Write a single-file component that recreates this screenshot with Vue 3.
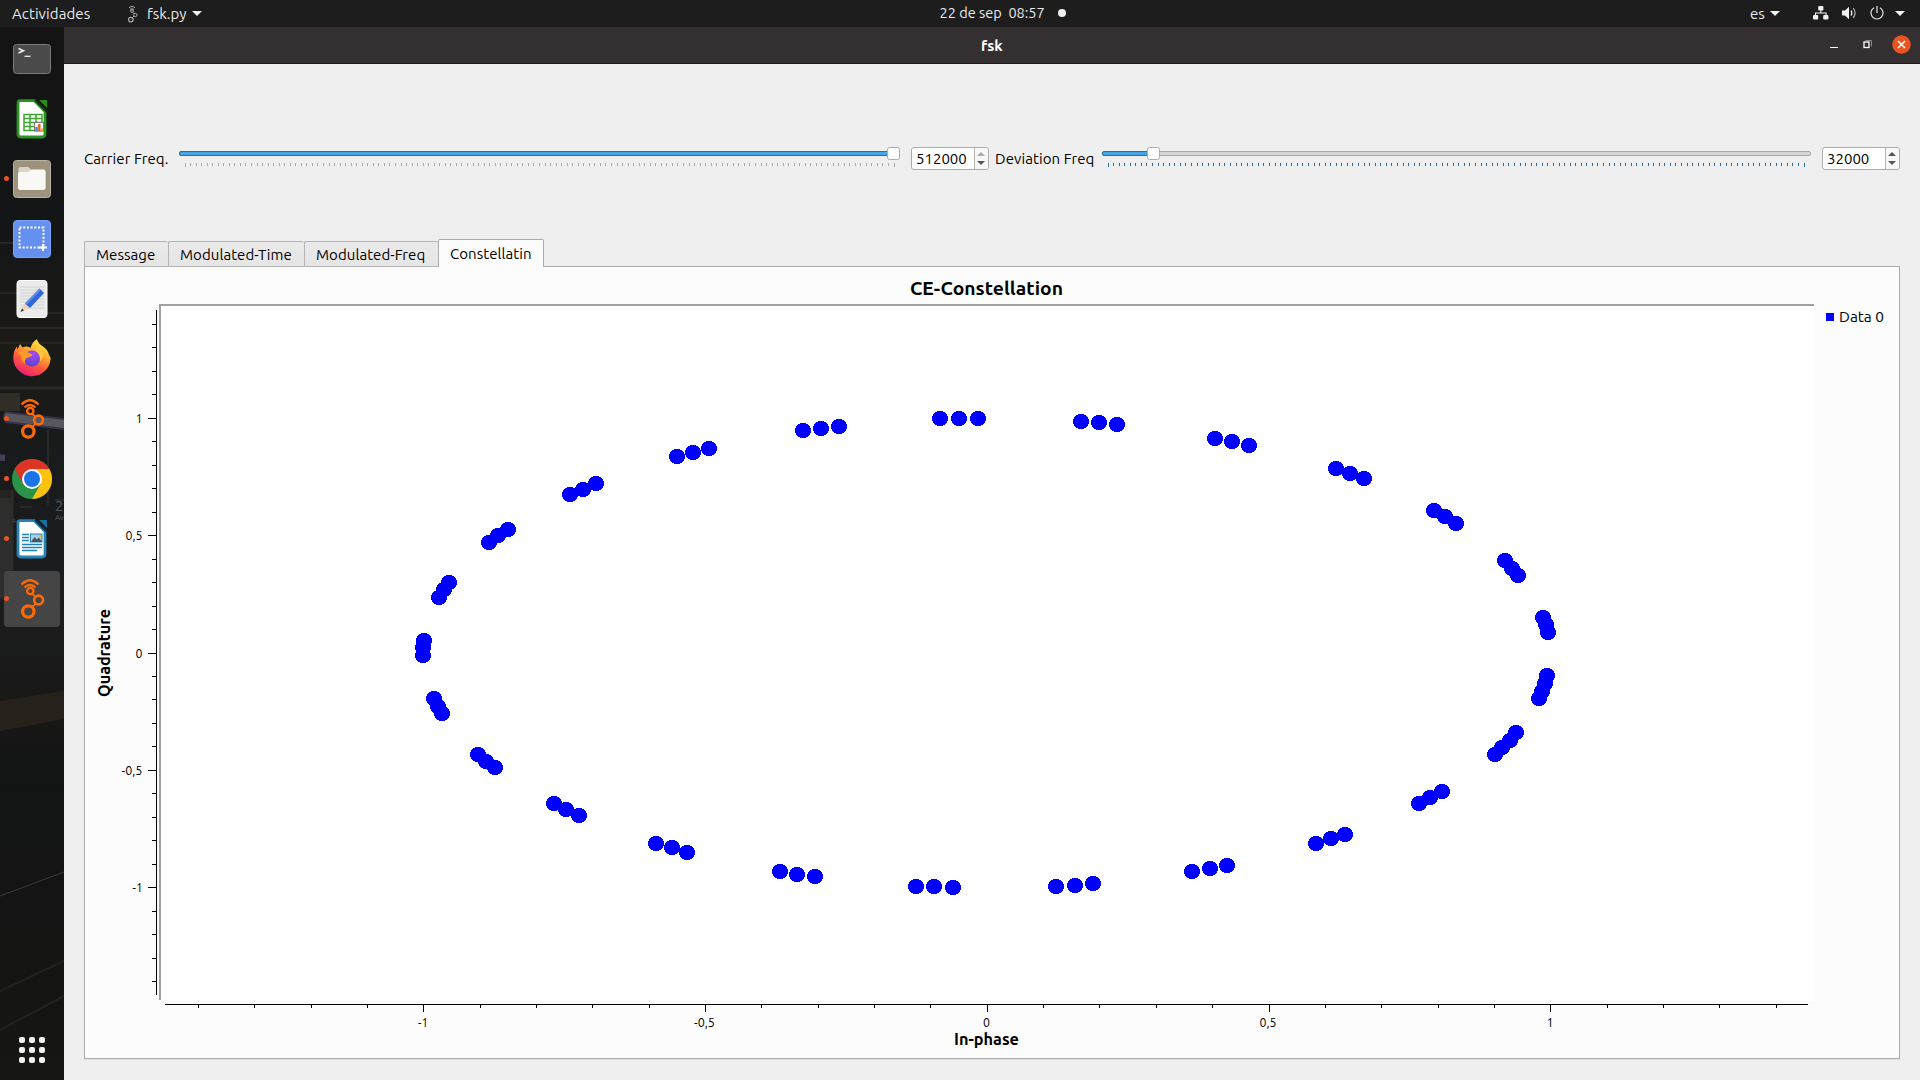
<script setup>
const xOf = (v) => Math.floor(987.3 + v * 563.4) + 0.5
const yOf = (v) => Math.floor(653 - v * 234.7) + 0.5

const steps = Array.from({ length: 29 }, (_, i) => i - 14)
const xTicks = steps.map((s) => ({ p: xOf(s / 10), major: s % 5 === 0 }))
const yTicks = steps.map((s) => ({ p: yOf(s / 10), major: s % 5 === 0 }))
const xLabels = [
  { p: 423.5, t: '-1', w: 10 }, { p: 705, t: '-0,5', w: 21 }, { p: 987, t: '0', w: 7 },
  { p: 1268.5, t: '0,5', w: 17 }, { p: 1550.5, t: '1', w: 7 },
]
const yLabels = [
  { p: 423, t: '1', w: 7 }, { p: 540, t: '0,5', w: 17 }, { p: 658, t: '0', w: 7 },
  { p: 775, t: '-0,5', w: 21 }, { p: 892, t: '-1', w: 10 },
]

const points = [
  [940, 418], [959, 418], [978, 418], [1081, 421], [1099, 422], [1117, 424],
  [1215, 438], [1232, 441], [1249, 445], [1336, 468], [1350, 473], [1364, 478],
  [1434, 510], [1445, 516], [1456, 523], [1505, 560], [1512, 568], [1518, 575],
  [1543, 617], [1546, 624], [1548, 632], [1547, 675], [1545, 683], [1542, 691], [1539, 698],
  [1516, 732], [1510, 740], [1502, 747], [1495, 754], [1442, 791], [1430, 797], [1419, 803],
  [1345, 834], [1331, 838], [1316, 843], [1227, 865], [1210, 868], [1192, 871],
  [1093, 883], [1075, 885], [1056, 886], [953, 887], [934, 886], [916, 886],
  [815, 876], [797, 874], [780, 871], [687, 852], [672, 847], [656, 843],
  [579, 815], [566, 809], [554, 803], [495, 767], [486, 761], [478, 754],
  [442, 713], [438, 706], [434, 698], [423, 655], [423, 647], [424, 640],
  [449, 582], [444, 589], [439, 597], [508, 529], [498, 535], [489, 542],
  [596, 483], [583, 489], [570, 494], [709, 448], [693, 452], [677, 456],
  [839, 426], [821, 428], [803, 430],
]

const sliders = {
  carrier: { width: 724, end: 718, ticks: 128, first: 6, last: 715, handle: 708, on: 718, color: '#a9a9a9' },
  deviation: { width: 712, end: 709, ticks: 125, first: 6, last: 702, handle: 45, on: 50, color: '#2a6f9e' },
}
const ticksOf = (s) =>
  Array.from({ length: s.ticks + 1 }, (_, i) => ({
    x: Math.floor(s.first + ((s.last - s.first) * i) / s.ticks),
    h: i === 0 || i === s.ticks ? 4 : 3,
  }))

const controls = [
  { key: 'carrier', label: 'Carrier Freq.', value: '512000', max: true },
  { key: 'deviation', label: 'Deviation Freq', value: '32000', max: false },
]
const tabs = [
  { t: 'Message', c: 't1' },
  { t: 'Modulated-Time', c: 't2' },
  { t: 'Modulated-Freq', c: 't3' },
  { t: 'Constellatin', c: 't4 active' },
]
const dock = [
  { n: 'terminal' }, { n: 'calc' }, { n: 'files', run: true }, { n: 'shot' }, { n: 'editor' },
  { n: 'firefox' }, { n: 'gnuradio', run: true }, { n: 'chrome', run: true },
  { n: 'writer', run: true }, { n: 'gnuradio', run: true, sel: true },
]
</script>

<template>
  <div class="desktop">
    <header class="topbar">
      <div class="side left">
        <span class="activities">Actividades</span>
        <svg class="appicon" width="10" height="18" viewBox="0 0 10 18" fill="none" stroke="#a8a8a8">
          <path d="M1 2.6Q4 0 7 2.6M2 4.4Q4 3 6 4.4" /><circle cx="4" cy="6" r="1.4" />
          <path d="M5 7.3L6.5 9M6 11L4 13" /><circle cx="7.3" cy="10" r="1.7" /><circle cx="2.8" cy="14.6" r="2.3" stroke-width="1.3" />
        </svg>
        <span class="appname">fsk.py</span>
        <i class="caret"></i>
      </div>
      <div class="clock"><span>22 de sep&nbsp; 08:57</span><i></i></div>
      <div class="side right">
        <span class="lang">es</span>
        <i class="caret"></i>
        <svg class="net" width="16" height="14" viewBox="0 0 16 14" fill="#f2f2f2">
          <rect x="5.2" y="0" width="5.2" height="4.4" rx="1" /><rect x="0" y="9" width="5.2" height="4.4" rx="1" /><rect x="10.2" y="9" width="5.2" height="4.4" rx="1" />
          <path d="M2.5 9.5V7h10.6v2.5M7.8 4v3" fill="none" stroke="#f2f2f2" stroke-width="1.1" />
        </svg>
        <svg class="vol" width="16" height="14" viewBox="0 0 16 14">
          <path d="M0 4.5h3L7 .8v12.4L3 9.5H0z" fill="#f2f2f2" />
          <path d="M9 4.5q1.7 2.5 0 5" fill="none" stroke="#f2f2f2" stroke-width="1.3" />
          <path d="M11.2 2.2q3.8 4.8 0 9.6" fill="none" stroke="#b5b5b5" stroke-width="1.2" />
        </svg>
        <svg class="pow" width="14" height="14" viewBox="0 0 14 14" fill="none" stroke="#e6e6e6" stroke-width="1.2">
          <path d="M4 1.8a6 6 0 1 0 6 0M7 0v7" />
        </svg>
        <i class="caret"></i>
      </div>
    </header>

    <div class="main">
      <nav class="dock">
        <svg class="wall" width="64" height="1053" viewBox="0 27 64 1053">
          <defs>
            <linearGradient id="wg" x1="0" y1="0" x2="0" y2="1">
              <stop offset="0" stop-color="#131313" /><stop offset=".18" stop-color="#131516" />
              <stop offset=".3" stop-color="#1b1a17" /><stop offset=".4" stop-color="#191a1b" />
              <stop offset=".55" stop-color="#1b1c1d" /><stop offset=".64" stop-color="#181817" />
              <stop offset=".72" stop-color="#121313" /><stop offset="1" stop-color="#161613" />
            </linearGradient>
          </defs>
          <rect y="27" width="64" height="1053" fill="url(#wg)" />
          <path d="M0 243h14M0 293h22M20 313h44M0 328h64M0 343h64" stroke="#38352a" />
          <path d="M0 388h64" stroke="#292823" stroke-width="3" />
          <path d="M0 393h20v18H0z" fill="#302e26" />
          <path d="M5 411l59 7v12L5 423q-4-6 0-12z" fill="#37304a" />
          <path d="M6 413l58 7v8L6 421q-3-4 0-8z" fill="#58565d" />
          <path d="M0 454l5 1v6H0z" fill="#453c55" />
          <path d="M0 490h14v110H0z" fill="#24231f" /><path d="M0 498h11v100H0z" fill="#34363a" opacity=".55" />
          <path d="M12 490v110M48 430v75M20 507h12M55 500h9" stroke="#3a3933" />
          <path d="M0 701l64-10v28L0 731z" fill="#26221b" />
          <path d="M0 896l64-24" stroke="#3a3a3a" />
          <path d="M0 991l64-30M0 1030l64-34" stroke="#22211c" stroke-width="2" />
          <text fill="#55585a" font-size="15"><tspan x="55" y="511">2</tspan><tspan x="55" y="520" font-size="8">Av</tspan></text>
          <text x="12" y="523" fill="#45484a" font-size="6">Avenue</text>
        </svg>
        <div v-for="(d, i) in dock" :key="i" class="slot" :class="{ sel: d.sel }">
          <i v-if="d.run" class="run"></i>
          <svg v-if="d.n === 'terminal'" width="40" height="40" viewBox="0 0 40 40">
            <rect x="1.5" y="5.5" width="37" height="29" rx="3" fill="#4b4b4b" stroke="#7a7a7a" />
            <path d="M6.5 9.5l5 2.2-5 2.3" fill="none" stroke="#eee" stroke-width="1.5" /><path d="M12.5 17.3h6" stroke="#eee" stroke-width="1.3" />
          </svg>
          <svg v-else-if="d.n === 'calc'" width="40" height="40" viewBox="0 0 40 40">
            <path d="M8 1.7h14.5L33 12.5V35q0 3-3 3H9q-3 0-3-3V4.5q0-2.8 2-2.8z" fill="#fff" stroke="#2b9421" stroke-width="2.8" />
            <path d="M27 1h8v8z" fill="#2b8c1e" /><path d="M23 1l12 12" stroke="#12380d" stroke-width="2" />
            <path d="M12 15.5h18v16H12zM12 19.5h18M12 23.5h18M12 27.5h18M18 15v17M24 15v17" fill="none" stroke="#3fa62f" stroke-width="1.5" />
            <rect x="22.5" y="23.5" width="9" height="8.5" fill="#fff" stroke="#777" /><path d="M24.5 32v-4" stroke="#3493d4" stroke-width="2.5" /><path d="M27.3 32v-7" stroke="#e5662c" stroke-width="2.5" /><path d="M30 32v-2.5" stroke="#edb32b" stroke-width="2.2" />
          </svg>
          <svg v-else-if="d.n === 'files'" width="40" height="40" viewBox="0 0 40 40">
            <rect x="1.5" y="1.5" width="37" height="37" rx="3" fill="#9c937f" stroke="#b9b2a3" />
            <path d="M6.5 10q0-2 2-2h8l3 3.5h12q2 0 2 2V29h-27z" fill="#d9d4c8" />
            <path d="M6 14.5q0-1.5 1.5-1.5h9l2.5-2.5h12.5q2 0 2 2V29q0 2-2 2H8q-2 0-2-2z" fill="#f9f8f5" />
          </svg>
          <svg v-else-if="d.n === 'shot'" width="40" height="40" viewBox="0 0 40 40">
            <rect x="1.5" y="1.5" width="37" height="37" rx="3.5" fill="#6590f0" stroke="#7ba1f4" />
            <rect x="7.5" y="8.5" width="24" height="20" fill="none" stroke="#fff" stroke-width="2" stroke-dasharray="2 1.7" />
            <path d="M31 25v7M27 28.5h8" stroke="#fff" stroke-width="2" />
          </svg>
          <svg v-else-if="d.n === 'editor'" width="40" height="40" viewBox="0 0 40 40">
            <rect x="5" y="1.5" width="30" height="37" rx="3" fill="#ebebeb" stroke="#fff" />
            <path d="M8 8h24M8 11h24M8 14h24M8 17h24M8 20h24M8 23h24M8 26h24M8 29h24" stroke="#cfcfcf" stroke-width=".9" />
            <path d="M9 32.5l4-8 5 4.5z" fill="#f3cfa6" /><path d="M8.5 33l1.5-3.5 2 2z" fill="#333" />
            <path d="M13 24.5L27.5 9.5l4.5 4.5L18 29z" fill="#2f66d8" /><path d="M13 24.5L27.5 9.5l1.5 1.5L14.5 26z" fill="#5b8cf0" />
          </svg>
          <svg v-else-if="d.n === 'firefox'" width="40" height="40" viewBox="0 0 40 40">
            <defs>
              <linearGradient id="ff" x1=".8" y1="0" x2=".3" y2="1"><stop offset="0" stop-color="#fff044" /><stop offset=".35" stop-color="#ffb030" /><stop offset=".65" stop-color="#ff5a3a" /><stop offset="1" stop-color="#e8187a" /></linearGradient>
              <radialGradient id="fp" cx=".6" cy=".2" r=".9"><stop offset="0" stop-color="#a94af0" /><stop offset="1" stop-color="#5244d0" /></radialGradient>
            </defs>
            <path d="M25 .2q1 4 5 6.5q6 4 7 9q2 3 1.500 5A18.700 18.700 0 0 1 1.300 20Q1 12 5 7.500q0 0 .5 3L8 5l2.500 3.500q4-2 8 .5Q20 3 25 .2z" fill="url(#ff)" />
            <circle cx="20" cy="19.5" r="8" fill="url(#fp)" />
            <path d="M6 13.5q6-3 12 1q3 1 2 2.500q-4 1-6 2.500q-2 3-1 5q-5-3-4-8z" fill="#ff9b28" />
            <path d="M24 12.5q5 3 4 10q5-5 2-12q-3-2-6-2z" fill="#ffc83c" />
          </svg>
          <svg v-else-if="d.n === 'gnuradio'" width="40" height="40" viewBox="0 0 40 40" fill="none" stroke="#ff6905">
            <path d="M9.5 5.5Q18-3 26.5 5.5M12.5 8.5Q18 3.500 23.500 8.500" stroke-width="2.3" />
            <circle cx="18.3" cy="12" r="3.2" stroke-width="2.3" />
            <circle cx="26.6" cy="21" r="4.4" stroke-width="2.6" />
            <circle cx="16.3" cy="32.5" r="5.7" stroke-width="3.2" />
            <path d="M20.5 15l3 2.800M23.500 24.700l-3 3.200" stroke-width="1.8" />
          </svg>
          <svg v-else-if="d.n === 'chrome'" width="40" height="40" viewBox="0 0 40 40">
            <circle cx="20" cy="20" r="20" fill="#2b9347" />
            <path d="M2.7 10A20 20 0 0 1 37.3 10L20 10L20 20L11.3 25z" fill="#dc3526" />
            <path d="M37.3 10A20 20 0 0 1 20 40L28.7 25L20 10z" fill="#fcc20e" />
            <circle cx="20" cy="20" r="10" fill="#fff" /><circle cx="20" cy="20" r="8" fill="#1b73e8" />
          </svg>
          <svg v-else width="40" height="40" viewBox="0 0 40 40">
            <path d="M8 1.7h14.5L33 12.5V35q0 3-3 3H9q-3 0-3-3V4.5q0-2.8 2-2.8z" fill="#fff" stroke="#2384b5" stroke-width="2.8" />
            <path d="M27 1h8v8z" fill="#1b6f9c" /><path d="M23 1l12 12" stroke="#0c3348" stroke-width="2" />
            <path d="M10 15.5h7M10 18.5h7M10 21.5h7M10 25.5h20M10 28.5h20M10 31.5h15" stroke="#2080b8" stroke-width="1.4" />
            <rect x="18.5" y="15" width="11.5" height="8" fill="#a6cfea" stroke="#2384b5" /><path d="M19 23l3.500-5 2.500 2.500 2-2 3 4.500z" fill="#47555c" /><circle cx="28" cy="17" r="1.3" fill="#f3b72c" />
          </svg>
        </div>
        <div class="grid9"><i v-for="n in 9" :key="n"></i></div>
      </nav>

      <section class="window">
        <div class="titlebar">
          <span class="title">fsk</span>
          <div class="winbtns">
            <i class="min"></i>
            <svg width="9" height="9" viewBox="0 0 9 9" fill="none"><path d="M2.5.5h6v6" stroke="#8c8a8a" /><rect x="1" y="2" width="5" height="5.5" stroke="#fff" stroke-width="1.3" /></svg>
            <svg width="19" height="19" viewBox="0 0 19 19"><circle cx="9.5" cy="9.5" r="9.3" fill="#e95420" /><path d="M6 6l7 7M13 6l-7 7" stroke="#fff" stroke-width="1.5" /></svg>
          </div>
        </div>

        <div class="controls">
          <template v-for="c in controls" :key="c.key">
            <span class="lbl" :class="c.key">{{ c.label }}</span>
            <svg class="slider" :width="sliders[c.key].width" height="24">
              <rect x=".5" y="4.5" :width="sliders[c.key].end - 1" height="4" rx="1.5" fill="#d6d6d6" stroke="#a8a8a8" />
              <rect x=".5" y="4.5" :width="sliders[c.key].on - 1" height="4" rx="1.5" fill="#43a5e2" stroke="#2672a4" />
              <rect v-for="(t, i) in ticksOf(sliders[c.key])" :key="i" :x="t.x" y="16" width="1" :height="t.h" :fill="sliders[c.key].color" />
              <rect :x="sliders[c.key].handle + 0.5" y=".5" width="12" height="12" rx="2" fill="#fdfdfd" stroke="#adadad" />
            </svg>
            <div class="spin" :class="c.key">
              <span>{{ c.value }}</span>
              <div class="arrows"><i class="up" :class="{ off: c.max }"></i><i class="down"></i></div>
            </div>
          </template>
        </div>

        <div class="tabs">
          <div v-for="t in tabs" :key="t.t" class="tab" :class="t.c"><span>{{ t.t }}</span></div>
        </div>

        <div class="pane">
          <svg width="1814" height="791" viewBox="85 267 1814 791" class="plot">
            <rect x="159" y="304" width="1656" height="697" fill="#fff" />
            <path d="M159 304H1814V306H161V1000H159z" fill="#a0a0a0" />
            <g stroke="#000" shape-rendering="crispEdges">
              <path d="M156.5 310V995M165 1004.5H1808" />
              <path v-for="t in xTicks" :key="'x' + t.p" :d="`M${t.p} 1004V${t.major ? 1012 : 1008}`" />
              <path v-for="t in yTicks" :key="'y' + t.p" :d="`M${t.major ? 148 : 152} ${t.p}H157`" />
            </g>
            <g font-size="13">
              <text v-for="l in xLabels" :key="'x' + l.t" :x="l.p - 0.5 - l.w / 2" y="1027" :textLength="l.w" lengthAdjust="spacingAndGlyphs">{{ l.t }}</text>
              <text v-for="l in yLabels" :key="'y' + l.t" :x="142.5 - l.w" :y="l.p" :textLength="l.w" lengthAdjust="spacingAndGlyphs">{{ l.t }}</text>
            </g>
            <g fill="#0000ff" shape-rendering="crispEdges">
              <ellipse v-for="([x, y], i) in points" :key="i" :cx="x" :cy="y + 0.5" rx="8" ry="7.5" />
            </g>
            <g font-weight="700">
              <text x="910" y="295" font-size="18.67" textLength="153" lengthAdjust="spacingAndGlyphs">CE-Constellation</text>
              <text x="954" y="1045" font-size="16" textLength="65" lengthAdjust="spacingAndGlyphs">In-phase</text>
              <text transform="translate(110 697) rotate(-90)" font-size="16" textLength="88" lengthAdjust="spacingAndGlyphs">Quadrature</text>
            </g>
            <rect x="1826" y="313" width="8" height="8" fill="#0000ff" />
            <text x="1839" y="322" font-size="15" textLength="45" lengthAdjust="spacingAndGlyphs">Data 0</text>
          </svg>
        </div>
      </section>
    </div>
  </div>
</template>

<style>
body { margin: 0; overflow: hidden; }
</style>

<style scoped>
.desktop { width: 1920px; height: 1080px; display: flex; flex-direction: column; font: 15px/20px "Ubuntu", "Noto Sans", sans-serif; color: #000; background: #efefef; overflow: hidden; white-space: nowrap; }
.topbar { height: 27px; flex: none; background: #1d1d1d; color: #e8e8e8; display: flex; align-items: center; }
.side { flex: 1; display: flex; align-items: center; }
.activities { margin-left: 12px; width: 78px; letter-spacing: 0.1px; }
.appicon { margin-left: 38px; }
.appname { margin-left: 9px; width: 41px; }
.caret { border: 5px solid transparent; border-top-color: #f2f2f2; border-bottom: 0; }
.left .caret { margin-left: 4px; }
.clock { display: flex; align-items: center; margin-left: 101px; }
.clock span { width: 106px; font-size: 14.5px; margin-top: -1px; }
.clock i { width: 8px; height: 8px; border-radius: 50%; background: #f2f2f2; margin-left: 12px; margin-right: 1px; margin-top: -1px; }
.right { justify-content: flex-end; padding-right: 15px; }
.lang { width: 15px; margin-right: 5px; }
.net { margin-left: 33px; }
.vol { margin-left: 13px; }
.pow { margin-left: 12px; margin-right: 11px; }
.right svg { margin-top: -1px; }
.main { flex: 1; display: flex; min-height: 0; }
.dock { width: 64px; flex: none; position: relative; display: flex; flex-direction: column; align-items: center; gap: 4px; padding-top: 4px; box-sizing: border-box; }
.wall { position: absolute; left: 0; top: 0; }
.slot { position: relative; width: 56px; height: 56px; flex: none; display: flex; align-items: center; justify-content: center; border-radius: 4px; }
.slot.sel { background: #454545; }
.slot svg { display: block; }
.run { position: absolute; left: 0; top: 25px; width: 5px; height: 5px; border-radius: 50%; background: #e95420; }
.grid9 { position: relative; margin: auto 0 17px; display: grid; grid-template-columns: repeat(3, 6px); gap: 4px; }
.grid9 i { width: 6px; height: 6px; border-radius: 2px; background: #f0f0ee; }
.window { flex: 1; display: flex; flex-direction: column; background: #efefef; }
.titlebar { height: 37px; flex: none; box-sizing: border-box; background: #343031; border-bottom: 1px solid #1d1a1b; color: #fff; font-weight: 700; display: flex; align-items: center; justify-content: center; position: relative; }
.title { margin-top: 1px; width: 22px; }
.winbtns { position: absolute; right: 9px; top: 8px; display: flex; align-items: center; }
.min { width: 8px; height: 1px; background: #fff; margin: 5px 25px 0 0; }
.winbtns svg + svg { margin-left: 20px; }
.controls { height: 175px; flex: none; box-sizing: border-box; padding: 83px 20px 0; display: flex; align-items: flex-start; }
.lbl { line-height: 24px; letter-spacing: 0.08px; }
.lbl.carrier { width: 95px; }
.lbl.deviation { width: 107px; margin-left: 6px; }
.slider { flex: none; overflow: visible; }
.spin { width: 78px; height: 23px; box-sizing: border-box; border: 1px solid #acacac; border-radius: 3px; background: #fff; display: flex; flex: none; }
.spin.carrier { margin-left: 8px; }
.spin.deviation { margin-left: 8px; }
.spin span { width: 62px; box-sizing: border-box; padding-left: 4px; line-height: 22px; }
.arrows { flex: 1; border-left: 1px solid #b4b4b4; background: #f7f7f7; border-radius: 0 2px 2px 0; display: flex; flex-direction: column; align-items: center; justify-content: center; gap: 5px; }
.arrows i { border: 4px solid transparent; margin-right: 1px; }
.up { border-bottom: 4px solid #555 !important; border-top: 0 !important; }
.up.off { border-bottom-color: #aaa !important; }
.down { border-top: 4px solid #555 !important; border-bottom: 0 !important; }
.tabs { height: 28px; margin: 0 20px -1px; flex: none; display: flex; align-items: flex-end; position: relative; }
.tab { height: 26px; box-sizing: border-box; border: 1px solid #b4b4b4; border-right: 0; border-radius: 2px 2px 0 0; background: linear-gradient(#eaeaea, #e5e5e5); line-height: 26px; padding-left: 11px; letter-spacing: 0.06px; }
.t1 { width: 84px; }
.t2 { width: 136px; }
.t3 { width: 134px; }
.t4 { width: 106px; height: 28px; line-height: 28px; border: 1px solid #ababab; border-bottom: 0; background: #fcfcfc; }
.pane { width: 1816px; height: 793px; box-sizing: border-box; margin-left: 20px; border: 1px solid #ababab; background: #fcfcfc; box-shadow: 0 1px 0 #dfdfdf; }
.plot { display: block; }
</style>
